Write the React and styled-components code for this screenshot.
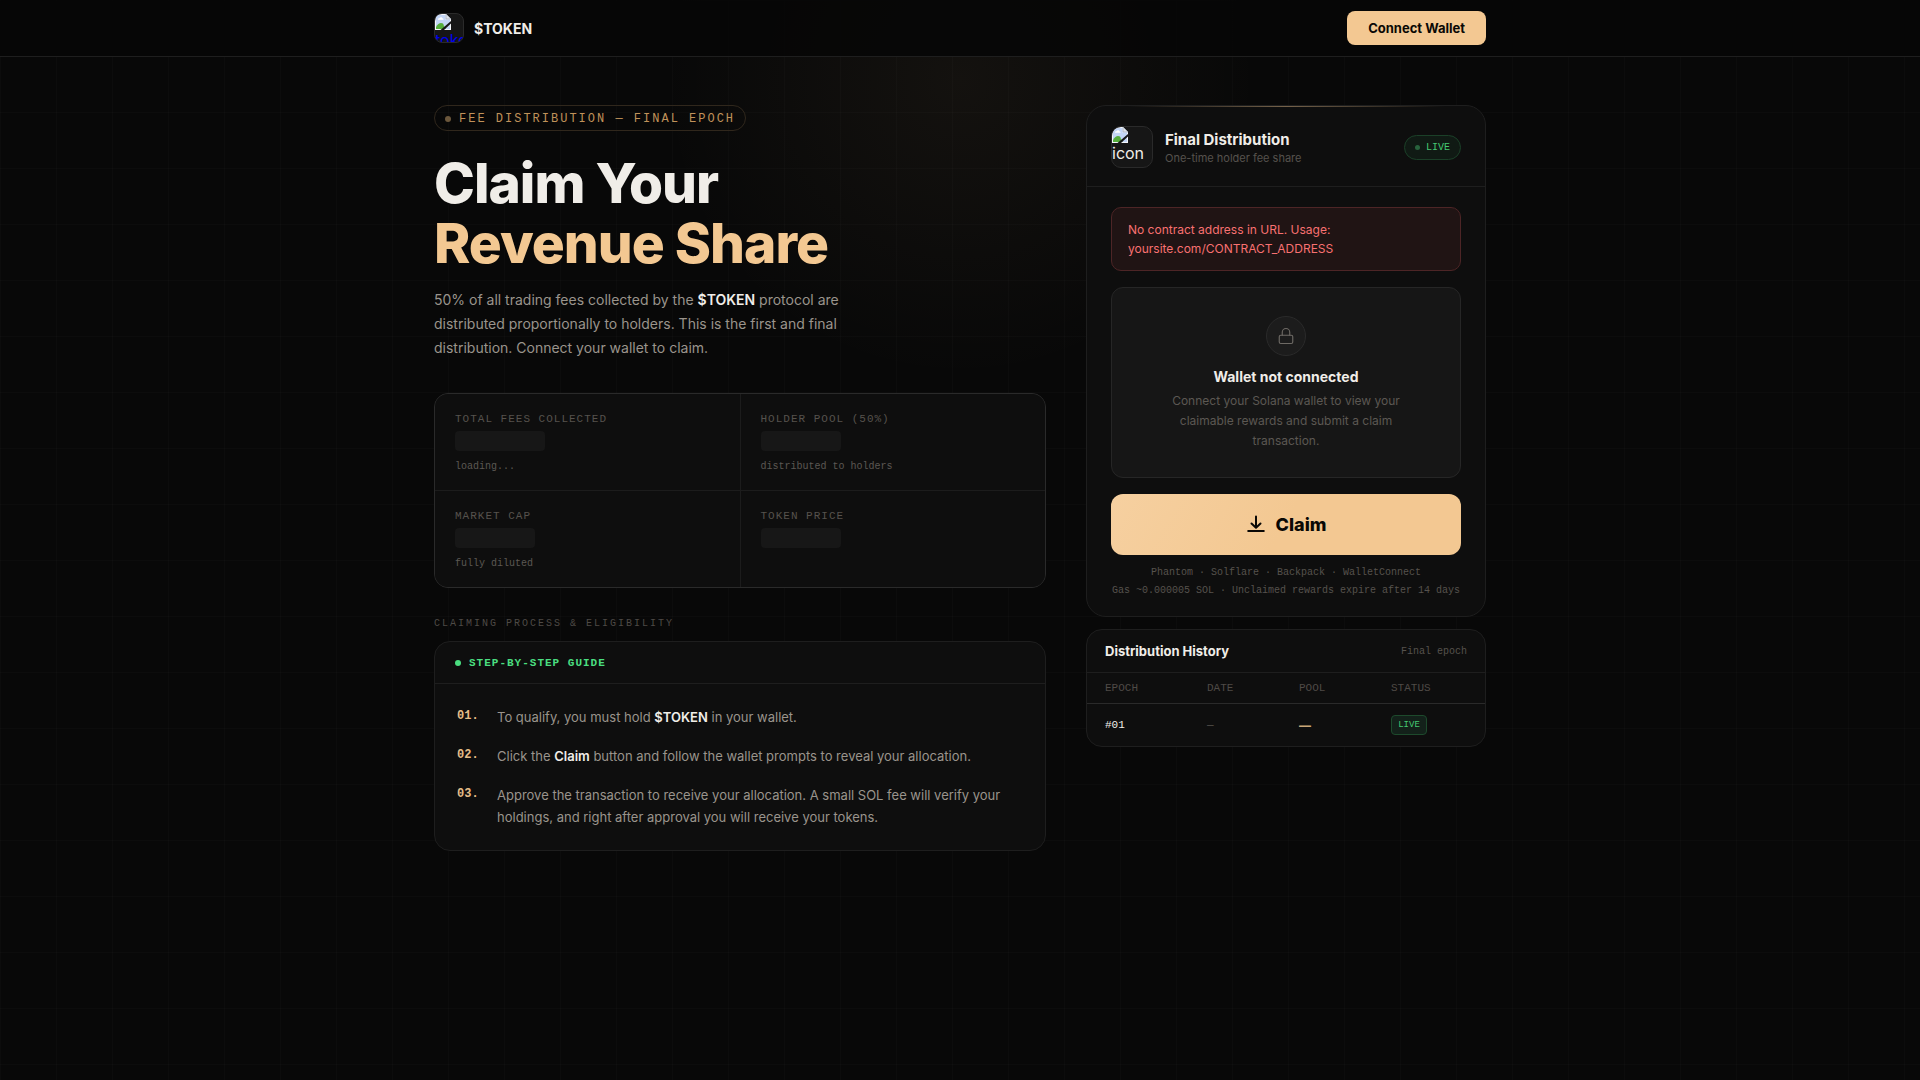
import styled, { createGlobalStyle } from 'styled-components'

const sans = `Inter, "Liberation Sans", sans-serif`
const mono = `"Liberation Mono", monospace`

const GlobalStyle = createGlobalStyle`
*{
box-sizing:border-box;
}

body{
margin:0;
background-color:#080808;
color:#f0ede8;
font-family:${sans};
}
`

const Page = styled.div`
min-height:100vh;
background-image:
  radial-gradient(ellipse 300px 300px at 50% 80px, rgba(243,200,146,0.05), transparent),
  linear-gradient(rgba(255,255,255,0.015) 1px, transparent 1px),
  linear-gradient(90deg, rgba(255,255,255,0.015) 1px, transparent 1px);
background-size:auto, 56px 56px, 56px 56px;
`

const Header = styled.header`
background-color:rgba(7,7,7,0.92);
border-bottom:1px solid #1e1e1e;
`

const HeaderInner = styled.div`
display:flex;
align-items:center;
justify-content:space-between;
max-width:1100px;
height:56px;
margin:0 auto;
padding:0 24px;
`

const Brand = styled.a`
display:flex;
align-items:center;
gap:10px;
color:#f0ede8;
font-size:14px;
font-weight:700;
text-decoration:none;
`

const ImageBox = styled.span`
display:block;
flex:none;
width:${(p) => p.$size}px;
height:${(p) => p.$size}px;
overflow:hidden;
background-color:#161616;
border:1px solid #2a2a2a;
border-radius:${(p) => p.$radius}px;
color:${(p) => p.$color};
font-size:16px;
font-weight:400;
line-height:20px;

svg{
display:block;
}
`

const ConnectButton = styled.button`
height:34px;
padding:0 21px;
border:none;
border-radius:8px;
background-color:#f3c892;
color:#0a0805;
font-family:${sans};
font-size:13px;
font-weight:700;
cursor:pointer;
`

const Main = styled.main`
display:grid;
grid-template-columns:minmax(0, 1fr) 400px;
align-items:start;
gap:40px;
max-width:1100px;
margin:0 auto;
padding:48px 24px;
`

const Column = styled.div`
display:flex;
flex-direction:column;
`

const Eyebrow = styled.div`
display:flex;
align-items:center;
align-self:flex-start;
gap:8px;
height:26px;
padding:1px 10px 0;
border:1px solid #30271c;
border-radius:13px;
color:#c0925a;
font-family:${mono};
font-size:12px;
letter-spacing:2px;
white-space:nowrap;
`

const Dot = styled.span`
flex:none;
width:${(p) => p.$size || 6}px;
height:${(p) => p.$size || 6}px;
border-radius:50%;
background-color:${(p) => p.$color};
`

const Title = styled.h1`
margin:22px 0 15px;
font-size:55px;
font-weight:800;
line-height:60px;
letter-spacing:-1px;

span{
display:block;
color:#f3c892;
}
`

const Lead = styled.p`
max-width:420px;
margin:0 0 33px;
color:#9a948c;
font-size:14px;
line-height:24px;

strong{
color:#f0ede8;
font-weight:600;
}
`

const Stats = styled.dl`
display:grid;
grid-template-columns:1fr 1fr;
gap:1px;
margin:0;
overflow:hidden;
background-color:#1c1c1c;
border:1px solid #2a2a2a;
border-radius:14px;
`

const Stat = styled.div`
height:96px;
padding:18px 20px 16px;
background-color:#0e0e0e;
font-family:${mono};
`

const StatLabel = styled.dt`
color:#56524d;
font-size:11px;
line-height:15px;
letter-spacing:1px;
`

const StatValue = styled.dd`
margin:4px 0 0;
color:#5c5853;
font-size:10px;
line-height:15px;
`

const Skeleton = styled.span`
display:block;
width:${(p) => p.$width}px;
height:20px;
margin-bottom:8px;
border-radius:4px;
background-color:#171717;
`

const SectionLabel = styled.h2`
margin:28px 0 10px;
color:#4e4a46;
font-family:${mono};
font-size:10px;
font-weight:400;
line-height:15px;
letter-spacing:2px;
`

const Card = styled.section`
overflow:hidden;
background-color:#0e0e0e;
border:1px solid #1e1e1e;
border-radius:${(p) => p.$radius || 16}px;
`

const GuideHead = styled.h3`
display:flex;
align-items:center;
gap:8px;
height:42px;
margin:0;
padding:0 20px;
border-bottom:1px solid #1e1e1e;
color:#4ade80;
font-family:${mono};
font-size:11px;
font-weight:700;
letter-spacing:1px;
`

const Steps = styled.ol`
display:flex;
flex-direction:column;
gap:17px;
margin:0;
padding:22px;
list-style:none;
`

const Step = styled.li`
display:grid;
grid-template-columns:40px 1fr;
color:#9a948c;
font-size:13px;
line-height:22px;

strong{
color:#f0ede8;
font-weight:600;
}
`

const StepNumber = styled.span`
color:#e6bd88;
font-family:${mono};
font-size:12px;
font-weight:700;
line-height:21px;
`

const ClaimCard = styled(Card)`
position:relative;
margin-bottom:12px;

&::before{
content:'';
position:absolute;
top:0;
left:10%;
right:10%;
height:1px;
background:linear-gradient(90deg, transparent, rgba(243,200,146,0.45), transparent);
}
`

const ClaimHead = styled.header`
display:flex;
align-items:center;
gap:12px;
padding:20px 24px 18px;
border-bottom:1px solid #1e1e1e;
`

const HeadText = styled.div`
flex:1;
padding-top:2px;
`

const CardTitle = styled.h2`
margin:0;
font-size:${(p) => p.$size}px;
font-weight:700;
line-height:20px;
`

const CardSub = styled.p`
margin:0;
color:#56524d;
font-size:11px;
line-height:16px;
`

const LivePill = styled.span`
display:flex;
align-items:center;
gap:6px;
height:25px;
padding:0 10px;
border:1px solid #1b4028;
border-radius:13px;
background-color:#101a14;
color:#45c972;
font-family:${mono};
font-size:10px;
`

const ClaimBody = styled.div`
display:flex;
flex-direction:column;
gap:16px;
padding:20px 24px 16px;
`

const ErrorBox = styled.div`
padding:12px 16px;
border:1px solid #4d2526;
border-radius:10px;
background-color:#201414;
color:#f87171;
font-size:12px;
line-height:19px;
`

const WalletBox = styled.div`
display:flex;
flex-direction:column;
align-items:center;
padding:28px 20px 26px;
border:1px solid #262626;
border-radius:12px;
background-color:#161616;
text-align:center;
`

const LockCircle = styled.span`
display:flex;
align-items:center;
justify-content:center;
width:40px;
height:40px;
border:1px solid #2a2a2a;
border-radius:50%;
background-color:#1c1c1c;
`

const WalletTitle = styled.h3`
margin:12px 0 6px;
font-size:14px;
font-weight:700;
line-height:17px;
`

const WalletText = styled.p`
max-width:240px;
margin:0;
color:#5c5853;
font-size:12px;
line-height:20px;
`

const ClaimButton = styled.button`
display:flex;
align-items:center;
justify-content:center;
gap:10px;
height:61px;
border:none;
border-radius:12px;
background:linear-gradient(120deg, #f6d0a0, #f3c892 50%);
color:#0a0805;
font-family:${sans};
font-size:18px;
font-weight:800;
cursor:pointer;
`

const Notes = styled.div`
margin-top:-7px;
color:#56524d;
font-family:${mono};
font-size:10px;
line-height:18px;
text-align:center;
white-space:nowrap;
`

const HistoryHead = styled.header`
display:flex;
align-items:center;
justify-content:space-between;
height:43px;
padding:0 18px;
border-bottom:1px solid #1e1e1e;
`

const HistoryNote = styled.span`
color:#56524d;
font-family:${mono};
font-size:10px;
`

const Table = styled.table`
width:100%;
table-layout:fixed;
border-collapse:separate;
border-spacing:0;
font-family:${mono};
font-size:11px;
text-align:left;
`

const Th = styled.th`
width:${(p) => p.$width};
height:31px;
padding:0 18px;
border-bottom:1px solid #2a2a2a;
color:#4e4a46;
font-weight:400;
`

const Td = styled.td`
height:42px;
padding:0 18px;
color:${(p) => p.$color || '#f0ede8'};
`

const PoolValue = styled.span`
font-family:${sans};
font-size:12px;
font-weight:700;
`

const StatusTag = styled.span`
display:inline-flex;
align-items:center;
justify-content:center;
width:36px;
height:20px;
border:1px solid #1d4a2c;
border-radius:4px;
background-color:#13211a;
color:#45c972;
font-size:9px;
`

const stats = [
  { label: 'TOTAL FEES COLLECTED', width: 90, note: 'loading...' },
  { label: 'HOLDER POOL (50%)', width: 80, note: 'distributed to holders' },
  { label: 'MARKET CAP', width: 80, note: 'fully diluted' },
  { label: 'TOKEN PRICE', width: 80 },
]

const steps = [
  <>To qualify, you must hold <strong>$TOKEN</strong> in your wallet.</>,
  <>Click the <strong>Claim</strong> button and follow the wallet prompts to reveal your allocation.</>,
  <>Approve the transaction to receive your allocation. A small SOL fee will verify your holdings, and right after approval you will receive your tokens.</>,
]

function MissingImage(){
    return(
        <svg width="16" height="16" viewBox="0 0 16 16" aria-hidden="true">
            <path d="M0 0h11l5 5v11H0z" fill="#f4f6fa" />
            <path d="M1 1h9.5v4.500H15V15H1z" fill="#c3d5f5" />
            <path d="M3 5.500c0-1 .8-1.500 1.500-1.300C5 3 7 3 7.300 4.300 8.300 4.200 8.700 5 8.500 5.700H3z" fill="#fff" />
            <path d="M1 15v-2c2-3.500 4.500-5 7-3.500L11 15z" fill="#55ad3c" />
            <path d="M11 15l-2.500-4L15 6v9z" fill="#c3d5f5" />
            <path d="M5.500 16L16 7v2.500L9 16z" fill="#161616" />
            <path d="M11 0v5h5z" fill="#dfe3ea" stroke="#9aa2ae" strokeWidth=".6" />
        </svg>
    )
}

function LockIcon(){
    return(
        <svg width="18" height="18" viewBox="0 0 24 24" fill="none" stroke="#6e6a65" strokeWidth="1.500" strokeLinecap="round" strokeLinejoin="round" aria-hidden="true">
            <rect x="3" y="11" width="18" height="11" rx="2" />
            <path d="M7 11V7a5 5 0 0 1 10 0v4" />
        </svg>
    )
}

function DownloadIcon(){
    return(
        <svg width="20" height="20" viewBox="0 0 20 20" fill="none" stroke="currentColor" strokeWidth="2" strokeLinecap="round" strokeLinejoin="round" aria-hidden="true">
            <path d="M10 1.500v11M5.500 8.500l4.500 4.300 4.500-4.300M2.200 16h15.600" />
        </svg>
    )
}

export default function App(){
    return(
        <Page>
            <GlobalStyle />
            <Header>
                <HeaderInner>
                    <Brand href="#">
                        <ImageBox $size={30} $radius={8} $color="#0000ee">
                            <MissingImage />
                            token
                        </ImageBox>
                        $TOKEN
                    </Brand>
                    <ConnectButton type="button">Connect Wallet</ConnectButton>
                </HeaderInner>
            </Header>

            <Main>
                <Column>
                    <Eyebrow><Dot $color="#6b573c" />FEE DISTRIBUTION — FINAL EPOCH</Eyebrow>
                    <Title>Claim Your <span>Revenue Share</span></Title>
                    <Lead>
                        50% of all trading fees collected by the <strong>$TOKEN</strong> protocol are
                        distributed proportionally to holders. This is the first and final
                        distribution. Connect your wallet to claim.
                    </Lead>

                    <Stats>
                        {stats.map((s) => (
                            <Stat key={s.label}>
                                <StatLabel>{s.label}</StatLabel>
                                <StatValue><Skeleton $width={s.width} />{s.note}</StatValue>
                            </Stat>
                        ))}
                    </Stats>

                    <SectionLabel>CLAIMING PROCESS &amp; ELIGIBILITY</SectionLabel>
                    <Card>
                        <GuideHead><Dot $color="#4ade80" />STEP-BY-STEP GUIDE</GuideHead>
                        <Steps>
                            {steps.map((text, i) => (
                                <Step key={i}>
                                    <StepNumber>0{i + 1}.</StepNumber>
                                    <span>{text}</span>
                                </Step>
                            ))}
                        </Steps>
                    </Card>
                </Column>

                <Column>
                    <ClaimCard $radius={20}>
                        <ClaimHead>
                            <ImageBox $size={42} $radius={10} $color="#f0ede8">
                                <MissingImage />
                                icon
                            </ImageBox>
                            <HeadText>
                                <CardTitle $size={15}>Final Distribution</CardTitle>
                                <CardSub>One-time holder fee share</CardSub>
                            </HeadText>
                            <LivePill><Dot $size={5} $color="#28633d" />LIVE</LivePill>
                        </ClaimHead>
                        <ClaimBody>
                            <ErrorBox role="alert">
                                No contract address in URL. Usage: yoursite.com/CONTRACT_ADDRESS
                            </ErrorBox>
                            <WalletBox>
                                <LockCircle><LockIcon /></LockCircle>
                                <WalletTitle>Wallet not connected</WalletTitle>
                                <WalletText>Connect your Solana wallet to view your claimable rewards and submit a claim transaction.</WalletText>
                            </WalletBox>
                            <ClaimButton type="button"><DownloadIcon />Claim</ClaimButton>
                            <Notes>
                                <div>Phantom · Solflare · Backpack · WalletConnect</div>
                                <div>Gas ~0.000005 SOL · Unclaimed rewards expire after 14 days</div>
                            </Notes>
                        </ClaimBody>
                    </ClaimCard>

                    <Card>
                        <HistoryHead>
                            <CardTitle $size={13}>Distribution History</CardTitle>
                            <HistoryNote>Final epoch</HistoryNote>
                        </HistoryHead>
                        <Table>
                            <thead>
                                <tr>
                                    <Th $width="102px">EPOCH</Th>
                                    <Th $width="92px">DATE</Th>
                                    <Th $width="92px">POOL</Th>
                                    <Th>STATUS</Th>
                                </tr>
                            </thead>
                            <tbody>
                                <tr>
                                    <Td>#01</Td>
                                    <Td $color="#56524d">—</Td>
                                    <Td $color="#c9a678"><PoolValue>—</PoolValue></Td>
                                    <Td><StatusTag>LIVE</StatusTag></Td>
                                </tr>
                            </tbody>
                        </Table>
                    </Card>
                </Column>
            </Main>
        </Page>
    )
}
